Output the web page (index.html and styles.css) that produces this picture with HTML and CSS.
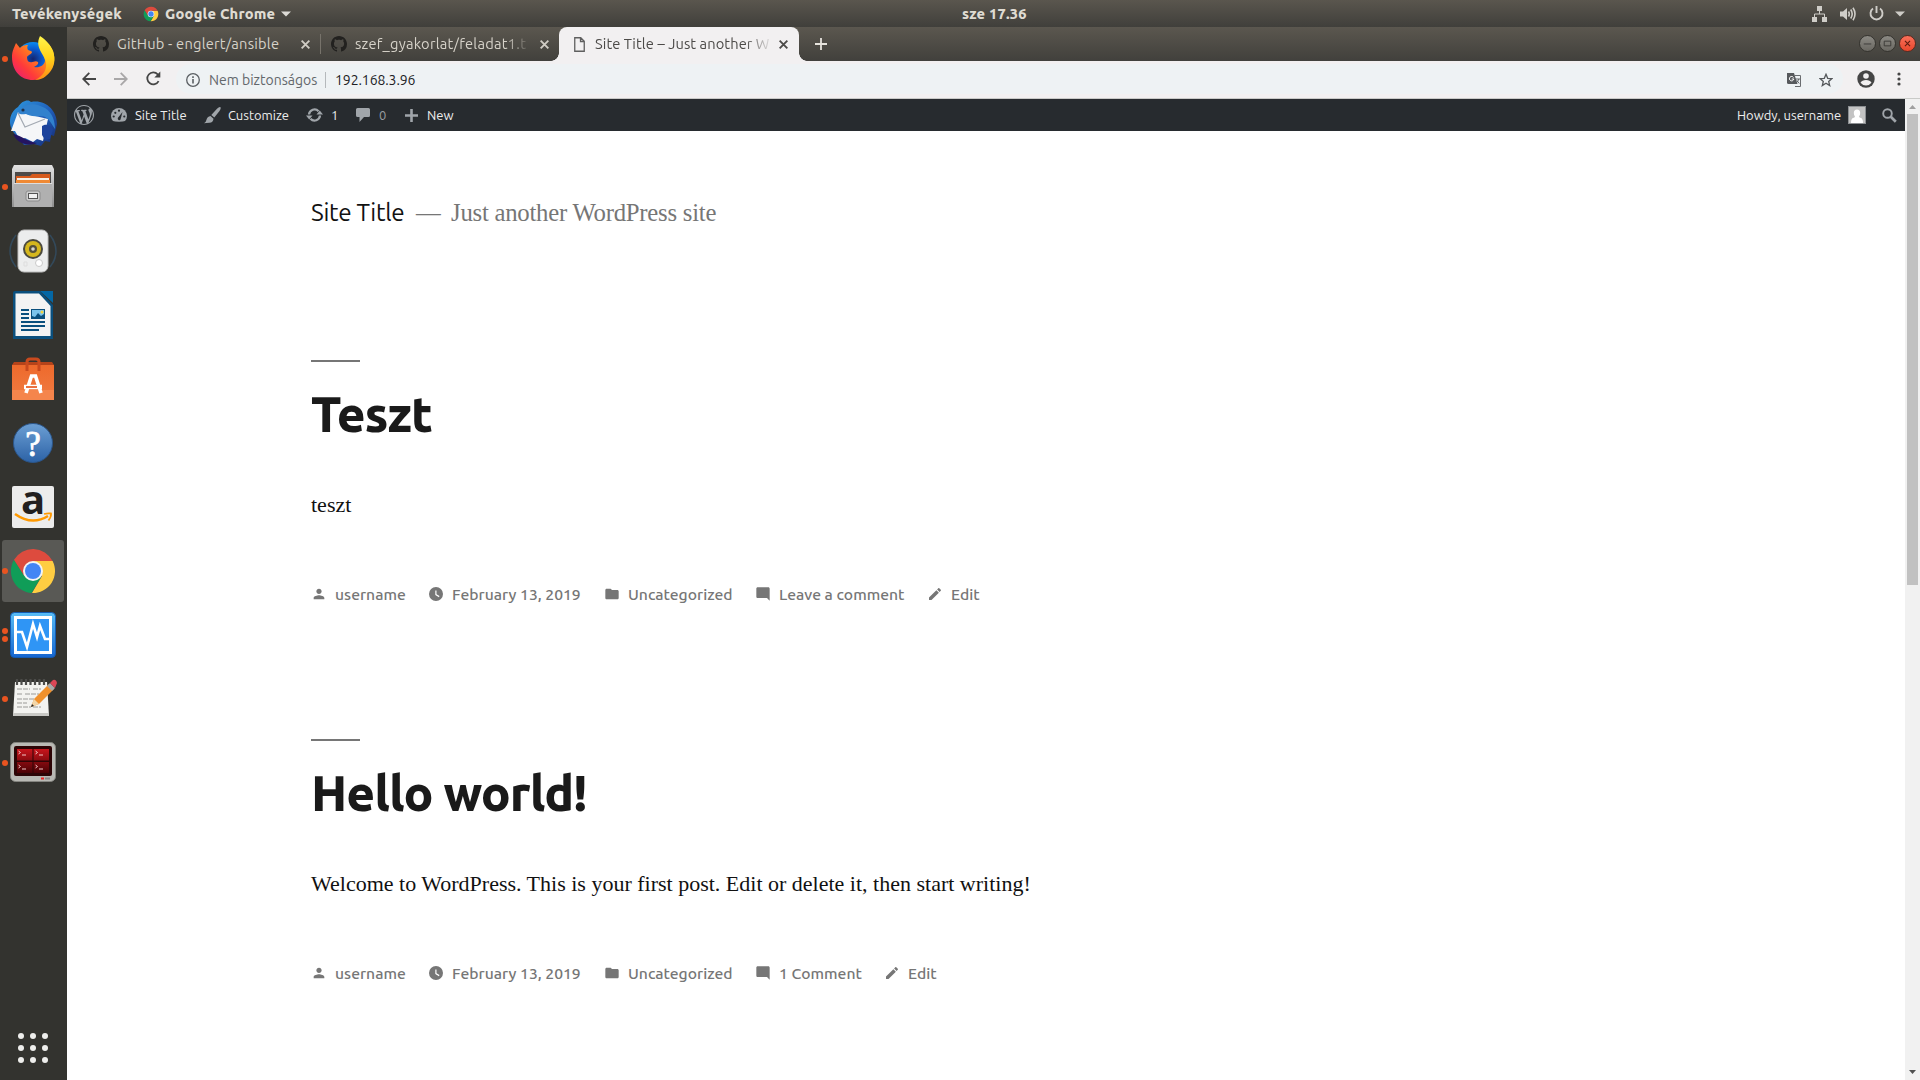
FILE: index.html
```
<!DOCTYPE html>
<html lang="hu">
<head>
<meta charset="utf-8">
<title>Site Title – Just another WordPress site</title>
<link rel="stylesheet" href="styles.css">
</head>
<body>
<svg class="defs" width="0" height="0" aria-hidden="true">
  <defs>
    <linearGradient id="ffOrange" x1="0" y1="1" x2="1" y2="0"><stop offset="0" stop-color="#e31587"/><stop offset=".3" stop-color="#ff3a3a"/><stop offset=".65" stop-color="#ff9416"/><stop offset="1" stop-color="#ffe228"/></linearGradient>
    <linearGradient id="ffYellow" x1="0" y1="0" x2="0" y2="1"><stop offset="0" stop-color="#fff44a"/><stop offset=".5" stop-color="#ffd21a"/><stop offset="1" stop-color="#ff8a16"/></linearGradient>
    <radialGradient id="ffBlue"><stop offset="0" stop-color="#14246e"/><stop offset=".6" stop-color="#0a5bd0"/><stop offset="1" stop-color="#0a8cf0"/></radialGradient>
    <linearGradient id="tb" x1="0" y1="0" x2="1" y2="1"><stop offset="0" stop-color="#2f9be0"/><stop offset=".55" stop-color="#1f5cb8"/><stop offset="1" stop-color="#15276f"/></linearGradient>
    <linearGradient id="metal" x1="0" y1="0" x2="0" y2="1"><stop offset="0" stop-color="#e2e2e2"/><stop offset="1" stop-color="#8f8f8f"/></linearGradient>
    <linearGradient id="bag" x1="0" y1="0" x2="0" y2="1"><stop offset="0" stop-color="#ee6a2c"/><stop offset="1" stop-color="#f07b42"/></linearGradient>
    <linearGradient id="help" x1="0" y1="0" x2="0" y2="1"><stop offset="0" stop-color="#6c9fd4"/><stop offset="1" stop-color="#2c62a6"/></linearGradient>
    <linearGradient id="vb" x1="0" y1="0" x2="0" y2="1"><stop offset="0" stop-color="#58bdf5"/><stop offset="1" stop-color="#1565d0"/></linearGradient>
    <linearGradient id="redTerm" x1="0" y1="0" x2="0" y2="1"><stop offset="0" stop-color="#c8141c"/><stop offset="1" stop-color="#4a0205"/></linearGradient>
    <symbol id="chrome" viewBox="0 0 48 48">
      <path d="M24 14H43.6A22 22 0 0 1 23 46L33 29z" fill="#ffcd42"/>
      <path d="M15.3 29 5 12.8A22 22 0 0 0 22.6 46L32 30z" fill="#109d58"/>
      <path d="M5 12.8A22 22 0 0 1 43.6 14H24L15.3 29z" fill="#dd4b3e"/>
      <circle cx="24" cy="24" r="10" fill="#f4f4f4"/><circle cx="24" cy="24" r="8" fill="#4285f4"/>
    </symbol>
    <symbol id="octocat" viewBox="0 0 16 16"><path fill="#22211f" d="M8 0C3.58 0 0 3.58 0 8c0 3.54 2.29 6.53 5.47 7.59.4.07.55-.17.55-.38 0-.19-.01-.82-.01-1.49-2.01.37-2.53-.49-2.69-.94-.09-.23-.48-.94-.82-1.13-.28-.15-.68-.52-.01-.53.63-.01 1.08.58 1.23.82.72 1.21 1.87.87 2.33.66.07-.52.28-.87.51-1.07-1.78-.2-3.64-.89-3.64-3.95 0-.87.31-1.59.82-2.15-.08-.2-.36-1.02.08-2.12 0 0 .67-.21 2.2.82.64-.18 1.32-.27 2-.27s1.36.09 2 .27c1.53-1.04 2.2-.82 2.2-.82.44 1.1.16 1.92.08 2.12.51.56.82 1.27.82 2.15 0 3.07-1.87 3.75-3.65 3.95.29.25.54.73.54 1.48 0 1.07-.01 1.93-.01 2.2 0 .21.15.46.55.38A8.01 8.01 0 0 0 16 8c0-4.42-3.58-8-8-8z"/></symbol>
    <symbol id="close" viewBox="0 0 10 10"><path d="M1.5 1.5l7 7M8.5 1.5l-7 7" stroke="currentColor" stroke-width="1.7"/></symbol>
    <symbol id="person" viewBox="0 0 24 24"><path d="M12 12c2.21 0 4-1.79 4-4s-1.79-4-4-4-4 1.79-4 4 1.79 4 4 4zm0 2c-2.67 0-8 1.34-8 4v2h16v-2c0-2.66-5.33-4-8-4z"/></symbol>
    <symbol id="watch" viewBox="0 0 16 16"><path fill-rule="evenodd" d="M8 1a7 7 0 1 0 0 14A7 7 0 0 0 8 1zm2.9 10.2L7.3 9V4.5h1.2v3.8l3 1.8z"/></symbol>
    <symbol id="folder" viewBox="0 0 24 24"><path d="M10 4H4c-1.1 0-1.99.9-1.99 2L2 18c0 1.1.9 2 2 2h16c1.1 0 2-.9 2-2V8c0-1.1-.9-2-2-2h-8l-2-2z"/></symbol>
    <symbol id="bubble" viewBox="0 0 24 24"><path d="M21.99 4c0-1.1-.89-2-1.99-2H4c-1.1 0-2 .9-2 2v12c0 1.1.9 2 2 2h14l4 4-.01-18z"/></symbol>
    <symbol id="pencil" viewBox="0 0 24 24"><path d="M3 17.25V21h3.75L17.81 9.94l-3.75-3.75L3 17.25zM20.71 7.04c.39-.39.39-1.02 0-1.41l-2.34-2.34c-.39-.39-1.02-.39-1.41 0l-1.83 1.83 3.75 3.75 1.83-1.83z"/></symbol>
  </defs>
</svg>

<header class="topbar">
  <span class="activities">Tevékenységek</span>
  <svg class="app-icon" width="16" height="16"><use href="#chrome"/></svg>
  <span class="app-name">Google Chrome</span>
  <svg width="10" height="6" viewBox="0 0 10 6"><path d="M0 .5h10L5 5.5z" fill="#dcdad5"/></svg>
  <span class="clock">sze 17.36</span>
  <span class="tray">
    <svg width="15" height="16" viewBox="0 0 15 16" fill="#cfcdc8"><path d="M5 0h5v5H5zM0 11h5v5H0zM10 11h5v5h-5z"/><path d="M7.5 5v3M2.5 11V8h10v3" fill="none" stroke="#cfcdc8"/></svg>
    <svg width="16" height="14" viewBox="0 0 16 14"><path d="M0 4.500h3L7 1v12L3 9.500H0z" fill="#cfcdc8"/><path d="M8.500 4.500q1.500 2.500 0 5M10.700 2.500q3 4.500 0 9M13 .8q4 6.200 0 12.400" fill="none" stroke="#cfcdc8" stroke-width="1.600"/></svg>
    <svg width="15" height="15" viewBox="0 0 15 15" fill="none" stroke="#cfcdc8" stroke-width="1.900"><path d="M4 2.600a6 6 0 1 0 7 0M7.500 0v7"/></svg>
    <svg width="10" height="6" viewBox="0 0 10 6"><path d="M0 .5h10L5 5.500z" fill="#cfcdc8"/></svg>
  </span>
</header>

<div class="desktop">
<nav class="dock">
  <div class="slot run"><svg viewBox="0 0 48 48">
    <circle cx="24" cy="24" r="17" fill="url(#ffBlue)"/>
    <path d="M3 22C3 16 5 13 7 8l4 5c3-3 6-3 8-3-1 2-1 3 0 5 2 1 4 1 4 2 0 2-4 3-5 5 0 3 1 5 3 5 3 1 5-2 8 0 1 2-2 4-4 5 5 1 10-1 11-6 0-6-7-13-5-23 6 4 10 6 13 13 2 6 2 13-2 18-4 7-10 11-18 11C12 45 3 36 3 22z" fill="url(#ffOrange)"/>
    <path d="M31 1c6 4 10 8 13 15 3 9 1 16-3 21-4 5-9 8-15 8 8-4 12-10 11-17C36 19 25 13 31 1z" fill="url(#ffYellow)"/>
  </svg></div>
  <div class="slot"><svg viewBox="0 0 48 48">
    <path d="M8 37C-2 29-1 14 9 8 13 1 20 0 22 3c14-3 26 8 26 22l-3 12-3-1-1 7-5-1-4 5-7-2-10 1z" fill="url(#tb)"/>
    <path d="M2 32l7-19 30 7-5 22-6-2-4 3-8-4-5 2-5-9z" fill="#f5f6f8"/><path d="M9 14l7 14 20-8" fill="none" stroke="#a3a9b2" stroke-width="1.200"/>
    <path d="M9 14C14 5 24 2 36 9c8 5 10 14 10 21-5-8-8-14-16-13-7 1-10-1-13-2-3 0-5 1-8-1z" fill="#3181cd"/><circle cx="14" cy="11" r="1.600" fill="#20324a"/>
    <path d="M33 27c5-3 8 0 11 3l-3 10-5 1-3-5z" fill="#1d439c"/><path d="M4 35c8 1 14 8 24 9-10 4-20 0-24-9z" fill="#241460"/>
  </svg></div>
  <div class="slot run"><svg viewBox="0 0 48 48">
    <path d="M5 2h38l2 4v38H3V6z" fill="url(#metal)"/><path d="M6 9h36v12H6z" fill="#4d4a48"/><path d="M7 13h14l2-2h18v9H7z" fill="#d65a1c"/><path d="M8 15h32v4H8z" fill="#f6efe4"/><path d="M7 17h34v4H7z" fill="#f08a34"/>
    <path d="M5 20h38v24H5z" fill="#b0b0b0"/><path d="M5 20.500h38" stroke="#dedede"/><rect x="17" y="28" width="14" height="10" rx="2" fill="#cfcfcf" stroke="#8b8b8b"/><rect x="19.500" y="30.500" width="9" height="5" fill="#f2f2f2" stroke="#555"/>
  </svg></div>
  <div class="slot"><svg viewBox="0 0 48 48">
    <path d="M7 8q-12 16 0 32M41 8q12 16 0 32M4 12q-6 12 0 24M44 12q6 12 0 24" fill="none" stroke="#33495a" stroke-width="1.500"/>
    <rect x="9" y="3" width="30" height="42" rx="6" fill="#eceded" stroke="#bdbdbd"/><circle cx="24" cy="22" r="10" fill="#4b4a3f"/><circle cx="24" cy="22" r="8" fill="#d5b71d"/><circle cx="24" cy="22" r="4" fill="#55503a"/><circle cx="24" cy="22" r="1.800" fill="#d8d8d0"/><circle cx="30" cy="36" r="3.500" fill="#fff" stroke="#c9c9c9"/><path d="M15 35h3v4h-3z" fill="none" stroke="#ddd"/>
  </svg></div>
  <div class="slot"><svg viewBox="0 0 48 48">
    <path d="M6 0h25l13 14v34H4V2q0-2 2-2z" fill="#0a4f7d"/><path d="M6.500 2.500H30L41.500 15v30h-35z" fill="#f3f3f3"/><path d="M31 0h13v12z" fill="#0467a5"/>
    <path d="M12 19h8M12 23h8M12 27h8M12 31h24M12 35h24M12 39h18" stroke="#0a4f7d" stroke-width="2"/><rect x="22" y="18" width="14" height="10" fill="#0a4f7d"/><path d="M23 19h12v4l-3 2-3-3-3 4-3-1z" fill="#7cc4ec"/><circle cx="33" cy="21" r="1.500" fill="#f5d43c"/>
  </svg></div>
  <div class="slot"><svg viewBox="0 0 48 48">
    <path d="M3 10l2-3h38l2 3z" fill="#b5431a"/><path d="M3 10h42v35H3z" fill="url(#bag)"/><path d="M3 35h42v10H3z" fill="#f5854c"/>
    <path d="M18 16V7q0-3 3-3h6q3 0 3 3v9" fill="none" stroke="#c94a1e" stroke-width="3"/>
    <path d="M17 38l5.500-17h4L32 38" fill="none" stroke="#fff" stroke-width="3.600"/><path d="M15 32h18" stroke="#fff" stroke-width="4.500"/><path d="M17 32h11" stroke="#e9632c" stroke-width="1.800"/>
  </svg></div>
  <div class="slot"><svg viewBox="0 0 48 48">
    <circle cx="24" cy="24" r="19.500" fill="url(#help)" stroke="#2b5589"/><text x="24" y="37" text-anchor="middle" class="help-mark">?</text>
  </svg></div>
  <div class="slot"><svg viewBox="0 0 48 48">
    <rect x="3" y="3" width="42" height="42" rx="2" fill="#ececec"/><text x="24" y="31" text-anchor="middle" class="amazon-mark">a</text>
    <path d="M6 31q17 12 33 2" fill="none" stroke="#f90" stroke-width="2.600"/><path d="M35 31q4-1 7-.5.500 3-2.500 7" fill="none" stroke="#f90" stroke-width="1.800"/>
  </svg></div>
  <div class="slot run active"><svg viewBox="0 0 48 48"><use href="#chrome"/></svg></div>
  <div class="slot run twice"><svg viewBox="0 0 48 48">
    <rect x="1.500" y="1.500" width="45" height="45" rx="4" fill="url(#vb)" stroke="#135ab0"/><rect x="6.500" y="6.500" width="35" height="35" fill="#2f95f5" stroke="#fff" stroke-width="3"/>
    <path d="M7 21h6l5 15 6-23 4 13 3-11 5 13h5" fill="none" stroke="#fff" stroke-width="2.600"/>
  </svg></div>
  <div class="slot run"><svg viewBox="0 0 48 48">
    <path d="M6 7h32l2 34H4z" fill="#f3f3f0"/><path d="M4 38h36v3H4z" fill="#c9c9c5"/><path d="M8 4v6M12.500 4v6M17 4v6M21.500 4v6M26 4v6M30.500 4v6M35 4v6" stroke="#4c4c4a" stroke-width="2.200"/><path d="M8 14h13M24 14h8M8 19h6M16 19h14M8 24h18M8 28h10M8 32h14M24 32h8" stroke="#9a9a97" stroke-dasharray="5 1"/>
    <path d="M22 32l3-8L40 9l5 5-15 15z" fill="#f0912c"/><path d="M22 32l3-8 5 5z" fill="#f2d6a8"/><path d="M22 32l1-3 2 2z" fill="#222"/><path d="M38 11l3-3 5 5-3 3z" fill="#a9a9a9"/><path d="M41 8l3-3q3-1 4 3l-2 5z" fill="#dc4656"/>
  </svg></div>
  <div class="slot run"><svg viewBox="0 1 48 48">
    <rect x="1.500" y="4.500" width="45" height="39" rx="5" fill="#b9b9b4" stroke="#84847f"/><rect x="5" y="8" width="38" height="30" rx="2" fill="#2d0506"/><path d="M8 11h15.500v11.500H8zM24.500 11H40v11.500H24.500zM8 24h15.500v11H8zM24.500 24H40v11H24.500z" fill="url(#redTerm)"/>
    <path d="M9.500 13l2 1.500-2 1.500M13 17h4M26.500 13l2 1.500-2 1.500M30 17h4M9.500 27l2 1.500-2 1.500M13 31h4M26.500 27l2 1.500-2 1.500M30 31h4" fill="none" stroke="#f0c4c4"/><path d="M32 40.500h3" stroke="#e22" stroke-width="2"/><path d="M36 40.500h5" stroke="#888" stroke-width="2"/>
  </svg></div>
  <div class="apps"><i></i><i></i><i></i><i></i><i></i><i></i><i></i><i></i><i></i></div>
</nav>

<main class="browser">
  <div class="tabs">
    <div class="tab tab-a"><svg width="16" height="16"><use href="#octocat"/></svg><span>GitHub - englert/ansible</span><svg class="x" width="11" height="11"><use href="#close"/></svg></div>
    <div class="tab tab-b"><svg width="16" height="16"><use href="#octocat"/></svg><span>szef_gyakorlat/feladat1.t</span><svg class="x" width="11" height="11"><use href="#close"/></svg></div>
    <div class="tab tab-c"><svg width="11" height="15" viewBox="0 0 11 15"><path d="M.75.75h6l3.500 3.500v10H.75zM6.500.75V4.500h3.750" fill="none" stroke="#5f5f5f" stroke-width="1.300"/></svg><span>Site Title – Just another W</span><svg class="x" width="11" height="11"><use href="#close"/></svg></div>
    <svg class="plus" width="12" height="12" viewBox="0 0 12 12"><path d="M6 0v12M0 6h12" stroke="#e6e3dd" stroke-width="1.800"/></svg>
    <div class="window-buttons">
      <i><svg viewBox="0 0 16 16"><path d="M4 8.500h8" stroke="#3b3a36"/></svg></i>
      <i><svg viewBox="0 0 16 16"><path d="M4.500 5.500h7v5h-7z" fill="none" stroke="#3b3a36"/></svg></i>
      <i class="red"><svg viewBox="0 0 16 16"><path d="M5.300 5.300l5.400 5.400M10.700 5.300l-5.400 5.400" stroke="#5c1c10" stroke-width="1.200"/></svg></i>
    </div>
  </div>

  <div class="toolbar">
    <svg class="nav" width="14" height="14" viewBox="0 0 14 14"><path d="M14 7H1.500M7.300.8 1.200 7l6.100 6.200" fill="none" stroke="#454545" stroke-width="1.800"/></svg>
    <svg class="nav" width="14" height="14" viewBox="0 0 14 14"><path d="M0 7h12.500M6.700.8 12.800 7l-6.100 6.200" fill="none" stroke="#a9a7a8" stroke-width="1.800"/></svg>
    <svg class="nav" width="15" height="15" viewBox="0 0 15 15"><path d="M12.600 10.200A6 6 0 1 1 11.700 3.300L13 4.600" fill="none" stroke="#454545" stroke-width="1.800"/><path d="M14.300.5v6H8.300z" fill="#454545"/></svg>
    <div class="omnibox">
      <svg width="14" height="14" viewBox="0 0 14 14"><circle cx="7" cy="7" r="6.300" fill="none" stroke="#5a5f63" stroke-width="1.300"/><path d="M7 6v4.500M7 3.300v1.600" stroke="#5a5f63" stroke-width="1.600"/></svg>
      <span class="insecure">Nem biztonságos</span><span class="url">192.168.3.96</span>
      <svg class="translate" width="14" height="14" viewBox="0 0 14 14"><path d="M0 0h7l3.500 11H1.500Q0 11 0 9.500z" fill="#56595c"/><path d="M7.500 2.500h6v11H8" fill="none" stroke="#6a6d70"/><path d="M6.500 4.500A2.200 2.200 0 1 0 6.800 6H4.700" fill="none" stroke="#fff"/><path d="M8.500 6h4.500M11.800 6q-.8 3-2.800 4M9.800 7.500l2.500 3" fill="none" stroke="#56595c" stroke-width=".9"/></svg>
      <svg width="14" height="14" viewBox="0 0 14 14"><path d="M7 1.300l1.700 4 4.200.3-3.200 2.800 1 4.200L7 10.300l-3.700 2.300 1-4.200L1.100 5.600l4.200-.3z" fill="none" stroke="#54585b" stroke-width="1.300"/></svg>
    </div>
    <svg class="account" width="18" height="18" viewBox="0 0 18 18"><circle cx="9" cy="9" r="8.700" fill="#454545"/><circle cx="9" cy="6" r="2.800" fill="#f2f0f1"/><path d="M3.500 12.800q1.500-2.700 5.500-2.700t5.500 2.700Q12.500 15.500 9 15.500t-5.500-2.700z" fill="#f2f0f1"/></svg>
    <svg class="menu" width="4" height="14" viewBox="0 0 4 14" fill="#454545"><circle cx="2" cy="2" r="1.600"/><circle cx="2" cy="7" r="1.600"/><circle cx="2" cy="12" r="1.600"/></svg>
  </div>

  <div class="viewport">
    <div class="page">
      <div class="adminbar">
        <svg class="wp" width="20" height="20" viewBox="0 0 20 20"><path fill="#a0a5aa" d="M20 10c0-5.510-4.490-10-10-10C4.480 0 0 4.490 0 10c0 5.520 4.480 10 10 10 5.510 0 10-4.480 10-10zM7.780 15.370L4.370 6.220c.55-.02 1.170-.08 1.170-.08.5-.06.44-1.130-.06-1.110 0 0-1.450.11-2.370.11-.18 0-.37 0-.58-.01C4.120 2.690 6.870 1.110 10 1.110c2.330 0 4.450.87 6.050 2.340-.68-.11-1.650.39-1.650 1.580 0 .74.45 1.360.9 2.100.35.61.55 1.360.55 2.460 0 1.490-1.400 5-1.400 5l-3.030-8.370c.54-.02.82-.17.82-.17.5-.05.44-1.250-.06-1.220 0 0-1.440.12-2.380.12-.87 0-2.330-.12-2.330-.12-.5-.03-.56 1.200-.06 1.220l.92.08 1.260 3.410zM17.410 10c.24-.64.74-1.870.43-4.250.7 1.290 1.050 2.710 1.050 4.250 0 3.290-1.730 6.240-4.400 7.780.97-2.590 1.940-5.200 2.920-7.780zM6.100 18.090C3.120 16.650 1.110 13.530 1.110 10c0-1.300.23-2.480.72-3.590C3.250 10.300 4.670 14.200 6.100 18.090zm4.030-6.630l2.580 6.980c-.86.29-1.760.45-2.710.45-.79 0-1.570-.11-2.290-.33.81-2.380 1.620-4.740 2.420-7.100z"/></svg>
        <svg class="dash" width="16" height="14" viewBox="0 0 16 14"><path d="M2 13Q0 11 0 8a8 8 0 0 1 16 0q0 3-2 5Q12.500 13.800 8 13.800T2 13z" fill="#a0a5aa"/><path d="M9.500 11.500 11.500 4 7 9.800q-.8 1.500.5 2.200t2-.5z" fill="#272b2f"/><g fill="#272b2f"><circle cx="2.700" cy="8.500" r="1.100"/><circle cx="4.300" cy="4.800" r="1.100"/><circle cx="8" cy="2.700" r="1.100"/><circle cx="13.300" cy="8.500" r="1.100"/></g></svg>
        <span class="t-site">Site Title</span>
        <svg class="brush" width="17" height="17" viewBox="0 0 17 17" fill="#a0a5aa"><path d="M16.500.3Q17.300 1 15.500 4L10.300 10.500 7.300 8 13 1.800Q15.500-.6 16.500.3zM6.500 9l3 2.700Q9 15.500 5.500 15.700T0 16.200q2-1 2.400-3.200Q3.200 9.600 6.500 9z"/></svg>
        <span class="t-cust">Customize</span>
        <svg class="upd" width="17" height="14" viewBox="0 0 17 14"><path d="M3 6.500A5.500 5.500 0 0 1 12.500 3.200M14 7.500A5.500 5.500 0 0 1 4.500 10.800" fill="none" stroke="#a0a5aa" stroke-width="2.300"/><path d="M10.500 6.500h6.500L13.800 2.500zM0 7.500h6.500L3.200 11.500z" fill="#a0a5aa"/></svg>
        <span class="t-one">1</span>
        <svg class="com" width="14" height="14" viewBox="0 0 14 14"><path d="M1.500 0h11Q14 0 14 1.500v6Q14 9 12.500 9H8l-4.500 5V9h-2Q0 9 0 7.500v-6Q0 0 1.500 0z" fill="#a0a5aa"/></svg>
        <span class="t-zero">0</span>
        <svg class="add" width="13" height="13" viewBox="0 0 13 13"><path d="M6.500 0v13M0 6.500h13" stroke="#a0a5aa" stroke-width="2.600"/></svg>
        <span class="t-new">New</span>
        <span class="howdy">Howdy, username</span>
        <svg class="avatar" width="18" height="18" viewBox="0 0 18 18"><path d="M0 0h18v18H0z" fill="#8c8f92"/><path d="M1 1h16v16H1z" fill="#c3c3c3"/><path d="M9 3.500q3.200 0 3.200 3.500 0 2-1.200 3.500.2 1 2 1.500 2 .8 2 5H3q0-4.200 2-5 1.800-.500 2-1.500-1.200-1.500-1.200-3.500 0-3.500 3.200-3.500z" fill="#fff"/></svg>
        <svg class="find" width="15" height="15" viewBox="0 0 15 15"><circle cx="5.500" cy="5.500" r="4.300" fill="none" stroke="#a0a5aa" stroke-width="1.900"/><path d="M8.800 8.800l5 5" stroke="#a0a5aa" stroke-width="2.700"/></svg>
      </div>

      <div class="content">
        <div class="branding"><h1>Site Title</h1><span class="dashmark">—</span><p>Just another WordPress site</p></div>

        <article>
          <h2>Teszt</h2>
          <p class="body">teszt</p>
          <div class="meta">
            <span class="m-user"><svg><use href="#person"/></svg>username</span>
            <span class="m-date"><svg><use href="#watch"/></svg>February 13, 2019</span>
            <span class="m-cat"><svg><use href="#folder"/></svg>Uncategorized</span>
            <span class="m-leave"><svg><use href="#bubble"/></svg>Leave a comment</span>
            <span class="m-edit"><svg><use href="#pencil"/></svg>Edit</span>
          </div>
        </article>

        <article>
          <h2>Hello world!</h2>
          <p class="body">Welcome to WordPress. This is your first post. Edit or delete it, then start writing!</p>
          <div class="meta">
            <span class="m-user"><svg><use href="#person"/></svg>username</span>
            <span class="m-date"><svg><use href="#watch"/></svg>February 13, 2019</span>
            <span class="m-cat"><svg><use href="#folder"/></svg>Uncategorized</span>
            <span class="m-count"><svg><use href="#bubble"/></svg>1 Comment</span>
            <span class="m-edit"><svg><use href="#pencil"/></svg>Edit</span>
          </div>
        </article>
      </div>
    </div>
    <div class="scrollbar">
      <svg width="7" height="4" viewBox="0 0 7 4"><path d="M0 4h7L3.500 0z" fill="#a0a0a0"/></svg>
      <div class="thumb"></div>
      <svg class="down" width="7" height="4" viewBox="0 0 7 4"><path d="M0 0h7L3.500 4z" fill="#505050"/></svg>
    </div>
  </div>
</main>
</div>
</body>
</html>
```
FILE: styles.css
```
* { box-sizing: border-box; }
html, body { margin: 0; width: 1920px; height: 1080px; overflow: hidden; }
body { display: flex; flex-direction: column; background: #fff; font-family: Ubuntu, "Noto Sans", sans-serif; }
svg { display: block; flex: none; }
span { white-space: nowrap; }
.defs { position: absolute; }
h1, h2, p { margin: 0; }

/* GNOME top bar */
.topbar { height: 27px; flex: none; display: flex; align-items: center; padding: 0 15px 0 12px; background: linear-gradient(#5a564e, #403f3b); color: #dfdbd2; font-size: 14.67px; font-weight: 800; letter-spacing: .2px; }
.activities { width: 131px; }
.app-icon { margin-right: 6px; }
.app-name { width: 116px; }
.clock { margin-left: 671px; }
.tray { margin-left: auto; display: flex; align-items: center; gap: 13px; }
.tray svg:last-child { margin-left: -2px; }

/* Launcher */
.desktop { flex: 1; display: flex; min-height: 0; }
.dock { width: 67px; flex: none; background: #33332f; padding: 1px 3px 0 2px; display: flex; flex-direction: column; gap: 2px; }
.slot { position: relative; height: 62px; flex: none; border-radius: 3px; display: flex; align-items: center; padding-left: 7px; }
.slot svg { width: 48px; height: 48px; }
.slot.active { background: #595955; }
.slot.run::before { content: ""; position: absolute; left: 0; top: 28px; width: 6px; height: 6px; border-radius: 50%; background: #e95420; }
.slot.twice::before { top: 24px; box-shadow: 0 8px #e95420; }
.help-mark { font: 35px "Liberation Serif", serif; fill: #fff; stroke: #fff; stroke-width: .8px; }
.amazon-mark { font: 700 40px "Open Sans", sans-serif; fill: #221f1f; }
.apps { margin: auto 0 17px 16px; width: 32px; display: grid; grid-template-columns: repeat(3, 6px); gap: 6px; }
.apps i { width: 6px; height: 6px; border-radius: 50%; background: #eeeeec; }

/* Browser chrome */
.browser { flex: 1; min-width: 0; display: flex; flex-direction: column; }
.tabs { height: 34px; flex: none; display: flex; align-items: center; padding-left: 15px; padding-right: 4px; background: linear-gradient(#5b574f, #41403c); }
.tab { height: 34px; display: flex; align-items: center; font-size: 14.67px; font-weight: 450; line-height: 18px; color: #d6d2c9; }
.tab span { margin-right: auto; padding-bottom: 1px; }
.tab .x { color: #d0ccc4; }
.tab-a { width: 238px; padding: 0 9px 0 11px; }
.tab-a span { margin-left: 8px; letter-spacing: .22px; }
.tab-b { width: 239px; padding: 0 9px 0 11px; background: linear-gradient(#77736b, #77736b) 0 center / 1px 20px no-repeat; }
.tab-b span { margin-left: 8px; width: 180px; letter-spacing: .24px; -webkit-mask: linear-gradient(90deg, #000 150px, transparent 176px); mask: linear-gradient(90deg, #000 150px, transparent 176px); }
.tab-c { position: relative; width: 240px; padding: 0 10px 0 15px; background: #f2f0f1; color: #4c4a48; border-radius: 8px 8px 0 0; }
.tab-c span { margin-left: 10px; width: 180px; letter-spacing: .08px; -webkit-mask: linear-gradient(90deg, #000 150px, transparent 178px); mask: linear-gradient(90deg, #000 150px, transparent 178px); }
.tab-c .x { color: #4c4a48; }
.tab-c::before, .tab-c::after { content: ""; position: absolute; bottom: 0; width: 8px; height: 8px; }
.tab-c::before { left: -8px; background: radial-gradient(circle at 0 0, transparent 7.5px, #f2f0f1 8px); }
.tab-c::after { right: -8px; background: radial-gradient(circle at 100% 0, transparent 7.5px, #f2f0f1 8px); }
.plus { margin-left: 16px; }
.window-buttons { margin-left: auto; display: flex; gap: 3px; padding-bottom: 1px; }
.window-buttons i { width: 17px; height: 17px; border-radius: 50%; border: 1px solid #35342f; background: linear-gradient(#8b8983, #6a6862); }
.window-buttons svg { width: 15px; height: 15px; }
.window-buttons .red { background: linear-gradient(#f9705a, #e8472c); border-color: #5a2a20; }

.toolbar { height: 38px; flex: none; display: flex; align-items: center; padding: 0 19px 2px 15px; background: #f2f0f1; border-bottom: 1px solid #c9cac8; }
.nav { margin-right: 18px; }
.nav + .nav + .nav { margin-right: 15px; }
.omnibox { height: 30px; flex: 1; border-radius: 15px; background: #eef2f4; display: flex; align-items: center; padding: 2px 10px 0; font-size: 14px; font-weight: 450; color: #63676b; }
.insecure { margin-left: 9px; width: 116px; }
.url { padding-left: 9px; border-left: 1px solid #b5b9bc; line-height: 16px; color: #202124; letter-spacing: -.08px; }
.translate { margin: 0 18px 0 auto; }
.account { margin: 0 22px 0 14px; }

/* Viewport */
.viewport { flex: 1; display: flex; min-height: 0; }
.page { flex: 1; min-width: 0; background: #fff; }
.adminbar { height: 32px; display: flex; align-items: center; padding: 0 8px 0 7px; background: #272b2f; color: #eee; font-size: 13px; font-weight: 420; }
.dash { margin: 0 8px 0 17px; }
.t-site { width: 69px; }
.brush { margin-right: 7px; }
.t-cust { width: 78px; }
.upd { margin-right: 8px; }
.t-one { width: 25px; }
.com { margin-right: 9px; }
.t-zero { width: 26px; color: #9a9ea2; }
.add { margin-right: 9px; }
.howdy { margin-left: auto; width: 111px; }
.find { margin-left: 16px; }

.content { padding: 63px 0 0 244px; }
.branding { display: flex; align-items: baseline; height: 36px; margin-bottom: 130px; line-height: 36px; }
.branding h1 { width: 105px; font-size: 24.3px; font-weight: 450; letter-spacing: -.3px; color: #111; }
.branding .dashmark { width: 35px; font: 24.75px/36px "Liberation Serif", serif; color: #767676; }
.branding p { font: 24.75px/36px "Liberation Serif", serif; letter-spacing: -.2475px; color: #767676; }

article { height: 379px; }
article::before { content: ""; display: block; width: 49px; height: 2px; background: #767676; margin-bottom: 21px; }
h2 { height: 62px; line-height: 62px; font-size: 49.5px; font-weight: 800; letter-spacing: -.99px; color: #1a1a1a; margin-bottom: 40px; }
.body { font: 22px/40px "Liberation Serif", serif; color: #111; }
.meta { margin-top: 56px; display: flex; font-size: 15.7px; font-weight: 500; line-height: 26px; color: #767676; }
.meta span { display: flex; align-items: center; }
.meta svg { width: 16px; height: 16px; margin-right: 8px; fill: #767676; }
.m-user { width: 117px; }
.m-date { width: 176px; }
.m-cat { width: 151px; }
.m-leave { width: 172px; }
.m-count { width: 129px; }

/* Scrollbar */
.scrollbar { width: 15px; flex: none; background: #f1f1f1; display: flex; flex-direction: column; align-items: center; padding: 6px 0; }
.thumb { width: 11px; height: 471px; margin-top: 5px; background: #c1c1c1; }
.scrollbar .down { margin-top: auto; }
```
